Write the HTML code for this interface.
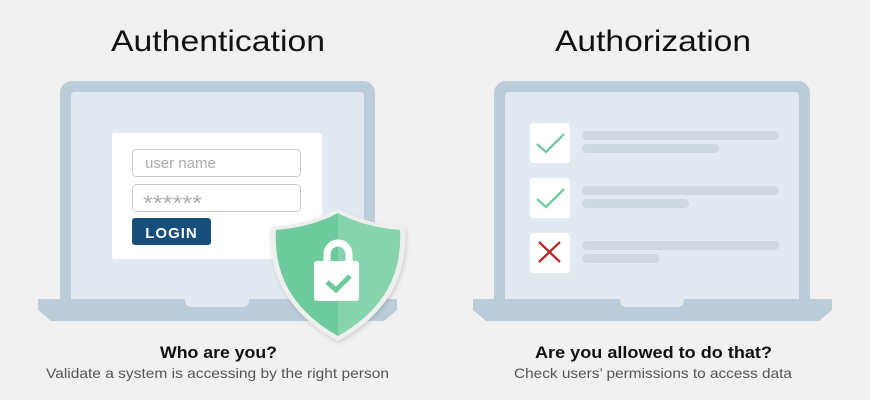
<!DOCTYPE html>
<html><head><meta charset="utf-8"><style>
html,body{margin:0;padding:0;background:#f1f1f1;}
svg{display:block}
text{font-family:"Liberation Sans",sans-serif;}
</style></head><body>
<svg width="870" height="400" viewBox="0 0 870 400" xmlns="http://www.w3.org/2000/svg">
<defs><filter id="sh" x="-20%" y="-20%" width="140%" height="140%"><feDropShadow dx="1" dy="2" stdDeviation="2" flood-color="#000" flood-opacity="0.15"/></filter></defs>
<rect width="870" height="400" fill="#f1f1f1"/>
<text x="218" y="51" font-size="30" text-anchor="middle" fill="#111" textLength="214" lengthAdjust="spacingAndGlyphs">Authentication</text>
<text x="653" y="51" font-size="30" text-anchor="middle" fill="#111" textLength="196" lengthAdjust="spacingAndGlyphs">Authorization</text>

<!-- left laptop -->
<rect x="60" y="81" width="315" height="230" rx="12" fill="#bccdda"/>
<rect x="71" y="92" width="293" height="215" rx="4" fill="#e2e9f0"/>
<path d="M38 299 H397 V310 L384 321 H51 L38 310 Z" fill="#bccdda"/>
<path d="M185 299 H249 V300 Q249 307 242 307 H192 Q185 307 185 300 Z" fill="#e2e9f0"/>
<rect x="112" y="133" width="210" height="126" rx="3" fill="#fff"/>
<rect x="132.5" y="149.5" width="168" height="27" rx="4" fill="#fff" stroke="#ccc"/>
<rect x="132.5" y="184.5" width="168" height="27" rx="4" fill="#fff" stroke="#ccc"/>
<text x="145" y="168" font-size="15" fill="#aaa">user name</text>
<text x="143" y="210" font-size="21" fill="#aaa" textLength="59" lengthAdjust="spacingAndGlyphs">******</text>
<rect x="132" y="218" width="79" height="27" rx="3" fill="#174f7c"/>
<text x="171.5" y="238" font-size="15" font-weight="bold" fill="#fff" text-anchor="middle" letter-spacing="1">LOGIN</text>

<!-- shield -->
<g filter="url(#sh)">
<path d="M338 209 Q310 224 271 227 Q266 302 338 341 Q410 302 405 227 Q366 224 338 209 Z" fill="#eef0ee"/>
</g>
<path d="M338 213 Q312 227 276 230 Q272 299 338 336 Z" fill="#6ecb9d"/>
<path d="M338 213 Q364 227 400 230 Q404 299 338 336 Z" fill="#87d4ae"/>
<path d="M327 262 V254 A11 11 0 0 1 349 254 V262" fill="none" stroke="#fff" stroke-width="7"/>
<rect x="314" y="261" width="45" height="40" rx="3" fill="#fff"/>
<path d="M327 282 L336 290 L350 276" fill="none" stroke="#6ecb9d" stroke-width="5"/>

<!-- right laptop -->
<rect x="494" y="81" width="316" height="230" rx="12" fill="#bccdda"/>
<rect x="505" y="92" width="294" height="215" rx="4" fill="#e2e9f0"/>
<path d="M473 299 H832 V310 L819 321 H486 L473 310 Z" fill="#bccdda"/>
<path d="M620 299 H684 V300 Q684 307 677 307 H627 Q620 307 620 300 Z" fill="#e2e9f0"/>

<rect x="530" y="123" width="40" height="40" rx="3" fill="#fff"/>
<rect x="530" y="178" width="40" height="40" rx="3" fill="#fff"/>
<rect x="530" y="233" width="40" height="40" rx="3" fill="#fff"/>
<path d="M537 144 L546 152 L564 134" fill="none" stroke="#72cc9e" stroke-width="2.4"/>
<path d="M537 199 L546 207 L564 189" fill="none" stroke="#72cc9e" stroke-width="2.4"/>
<path d="M539 242 L560 262 M560 242 L539 262" fill="none" stroke="#b52a2a" stroke-width="2.4"/>

<g fill="#d0d8e1">
<rect x="582" y="131" width="197" height="9" rx="4.5"/>
<rect x="582" y="144" width="137" height="9" rx="4.5"/>
<rect x="582" y="186" width="197" height="9" rx="4.5"/>
<rect x="582" y="199" width="107" height="9" rx="4.5"/>
<rect x="582" y="241" width="197" height="9" rx="4.5"/>
<rect x="582" y="254" width="77" height="9" rx="4.5"/>
</g>

<text x="218.5" y="358" font-size="17" font-weight="bold" fill="#111" text-anchor="middle" textLength="117" lengthAdjust="spacingAndGlyphs">Who are you?</text>
<text x="217.5" y="378" font-size="14" fill="#555" text-anchor="middle" textLength="343" lengthAdjust="spacingAndGlyphs">Validate a system is accessing by the right person</text>
<text x="653.5" y="358" font-size="17" font-weight="bold" fill="#111" text-anchor="middle" textLength="237" lengthAdjust="spacingAndGlyphs">Are you allowed to do that?</text>
<text x="653" y="378" font-size="14" fill="#555" text-anchor="middle" textLength="278" lengthAdjust="spacingAndGlyphs">Check users’ permissions to access data</text>
</svg>
</body></html>
